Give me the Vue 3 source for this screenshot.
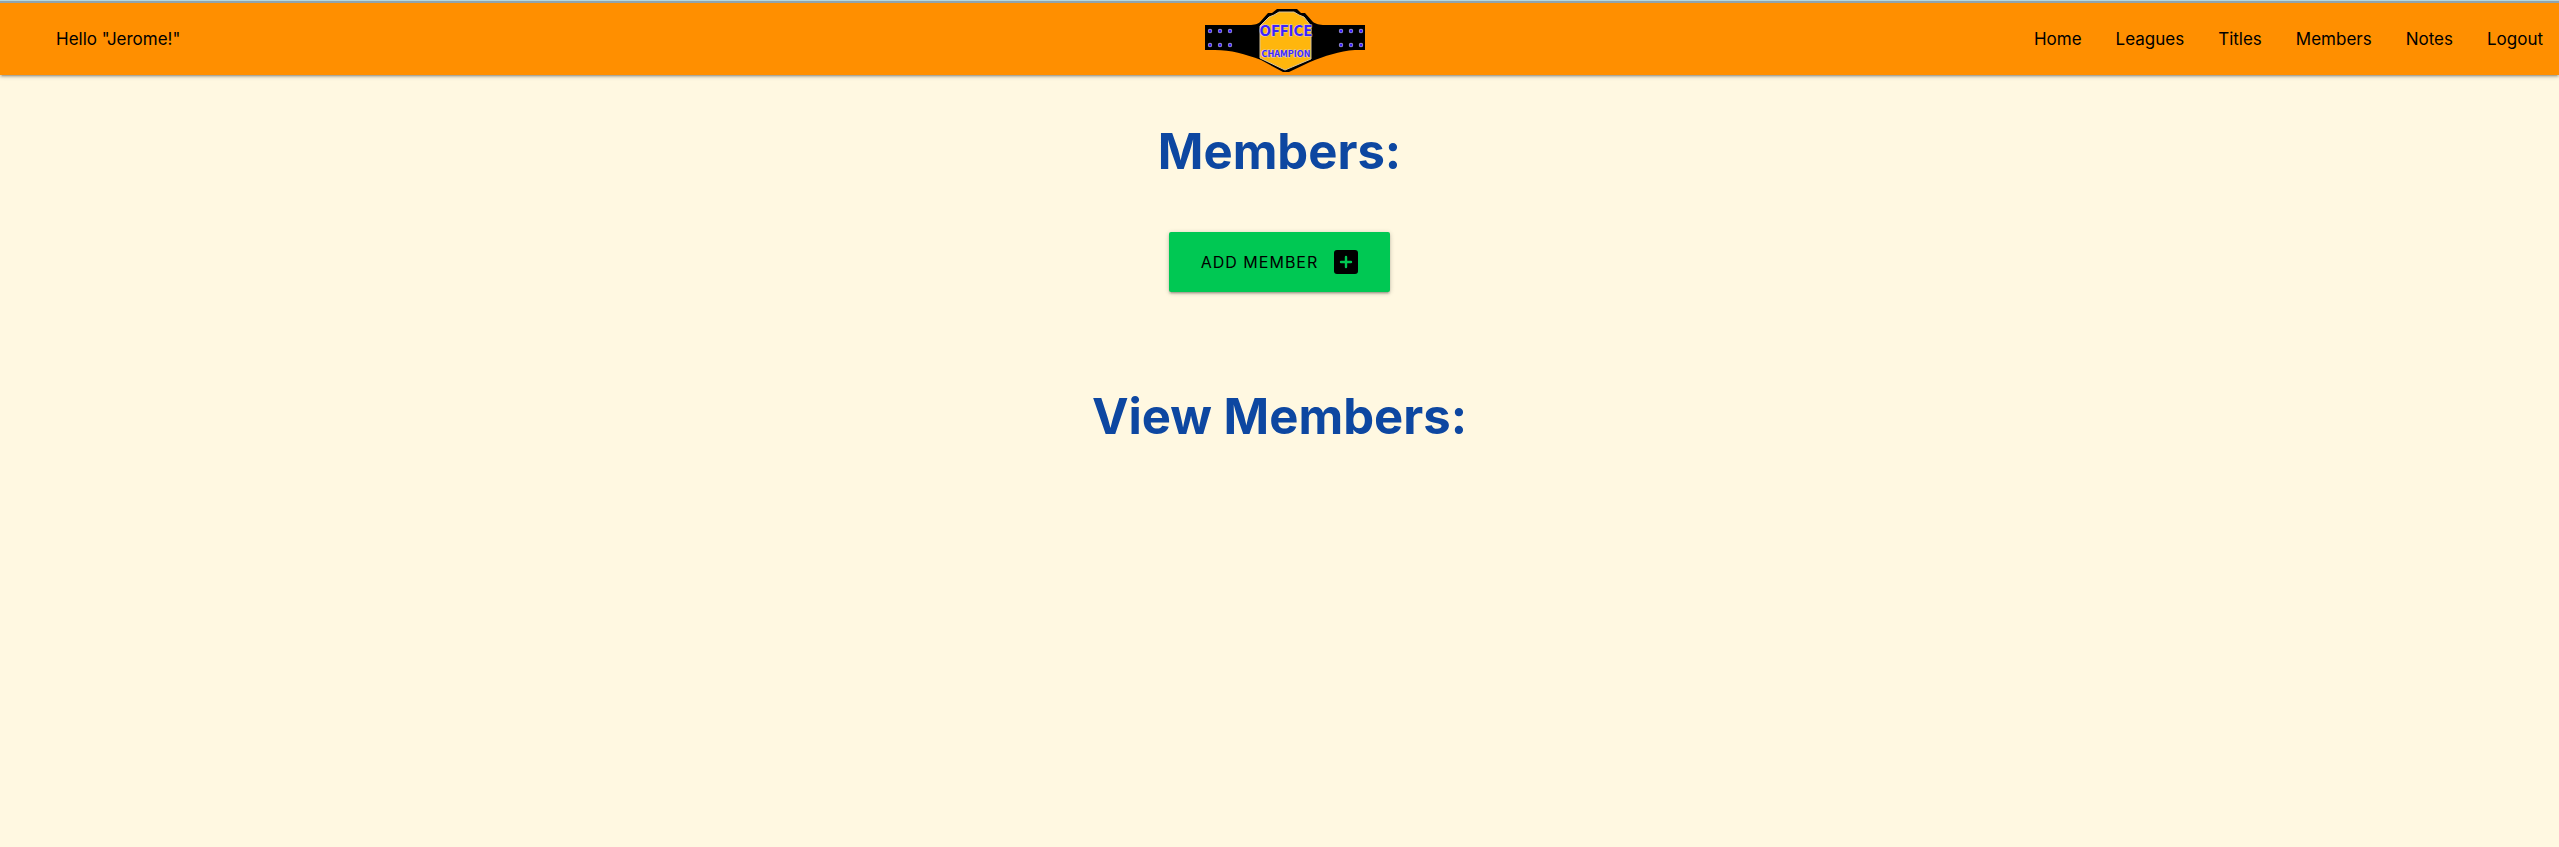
<script setup>
const links = ['Home', 'Leagues', 'Titles', 'Members', 'Notes', 'Logout']
const rivetColumns = [5, 15, 25, 136, 146, 156]
const rivetRows = [22, 36]
const rivets = rivetRows.flatMap((y) => rivetColumns.map((x) => ({ x, y })))
</script>

<template>
  <div class="page">
    <header class="bar">
      <span class="greeting">Hello "Jerome!"</span>
      <a class="brand" href="#" aria-label="Office Champion">
        <svg class="belt" viewBox="0 -4 160 68" role="img" aria-label="Office Champion belt">
          <path d="M0 16H44C50 16 53 15 55 13L63 4H67L72 0H92L96 4H100L108 13C111 15 114 16 120 16H160V41H150C134 42 120 47 105 53L84 63H78L56 51C40 45 26 41 10 41H0Z" fill="#000" />
          <path d="M64 8L69 6L74 3H89L94 6L99 8L106 17V50L80 61L55 49V17Z" fill="#ffb60d" stroke="#d9c59a" stroke-width="1" />
          <g v-for="r in rivets" :key="`${r.x}-${r.y}`">
            <circle :cx="r.x" :cy="r.y" r="2.2" fill="#a6a4c8" />
            <circle :cx="r.x" :cy="r.y" r="1.5" fill="#3d22ff" />
          </g>
          <text class="belt-title" x="81" y="27" text-anchor="middle">OFFICE</text>
          <text class="belt-sub" x="81" y="48" text-anchor="middle">CHAMPION</text>
        </svg>
      </a>
      <nav class="links">
        <a v-for="link in links" :key="link" href="#">{{ link }}</a>
      </nav>
    </header>
    <main class="content">
      <h1>Members:</h1>
      <button class="add" type="button">
        <span>ADD MEMBER</span>
        <svg class="plus" viewBox="0 0 24 24" aria-hidden="true">
          <rect width="24" height="24" rx="3" fill="#000" />
          <path d="M12 7V17M7 12H17" stroke="#00c853" stroke-width="2.4" stroke-linecap="round" />
        </svg>
      </button>
      <h1>View Members:</h1>
    </main>
  </div>
</template>

<style>
body {
  margin: 0;
  background: #fff8e1;
}
</style>

<style scoped>
.page {
  min-height: 100vh;
  background: #fff8e1;
  color: #000;
  font-family: Inter, "Liberation Sans", sans-serif;
}
.bar {
  display: grid;
  grid-template-columns: 1fr auto 1fr;
  align-items: center;
  box-sizing: border-box;
  height: 75px;
  padding: 3px 16px 0 26px;
  background: linear-gradient(#b5d8e0 1px, #90a4ae 1px, #90a4ae 3px, #ff8f00 3px);
  box-shadow: 0 2px 2px rgba(0, 0, 0, 0.14), 0 3px 1px -2px rgba(0, 0, 0, 0.12), 0 1px 5px rgba(0, 0, 0, 0.2);
  font-size: 17px;
  line-height: 24px;
}
.greeting {
  padding-left: 30px;
}
.brand {
  display: block;
}
.belt {
  display: block;
  width: 160px;
  height: 68px;
}
.belt-title,
.belt-sub {
  fill: #3d22ff;
  stroke: #d9d2c0;
  stroke-width: 1px;
  paint-order: stroke;
  font-family: "Noto Sans CJK JP", sans-serif;
  font-weight: 700;
}
.belt-title {
  font-size: 15px;
}
.belt-sub {
  font-size: 9px;
}
.links {
  display: flex;
  justify-content: flex-end;
  gap: 34px;
}
.links a {
  color: inherit;
  text-decoration: none;
}
.content {
  display: flex;
  flex-direction: column;
  align-items: center;
  padding-top: 47px;
}
h1 {
  margin: 0;
  color: #0d47a1;
  font-size: 49px;
  font-weight: 700;
  line-height: 60px;
}
.add {
  display: flex;
  align-items: center;
  gap: 16px;
  height: 60px;
  margin: 50px 0 95px;
  padding: 0 32px;
  border: 0;
  border-radius: 2px;
  background: #00c853;
  box-shadow: 0 2px 2px rgba(0, 0, 0, 0.14), 0 3px 1px -2px rgba(0, 0, 0, 0.12), 0 1px 5px rgba(0, 0, 0, 0.2);
  color: #000;
  font-family: inherit;
  font-size: 16px;
  letter-spacing: 1px;
  cursor: pointer;
}
.plus {
  width: 24px;
  height: 24px;
}
</style>
